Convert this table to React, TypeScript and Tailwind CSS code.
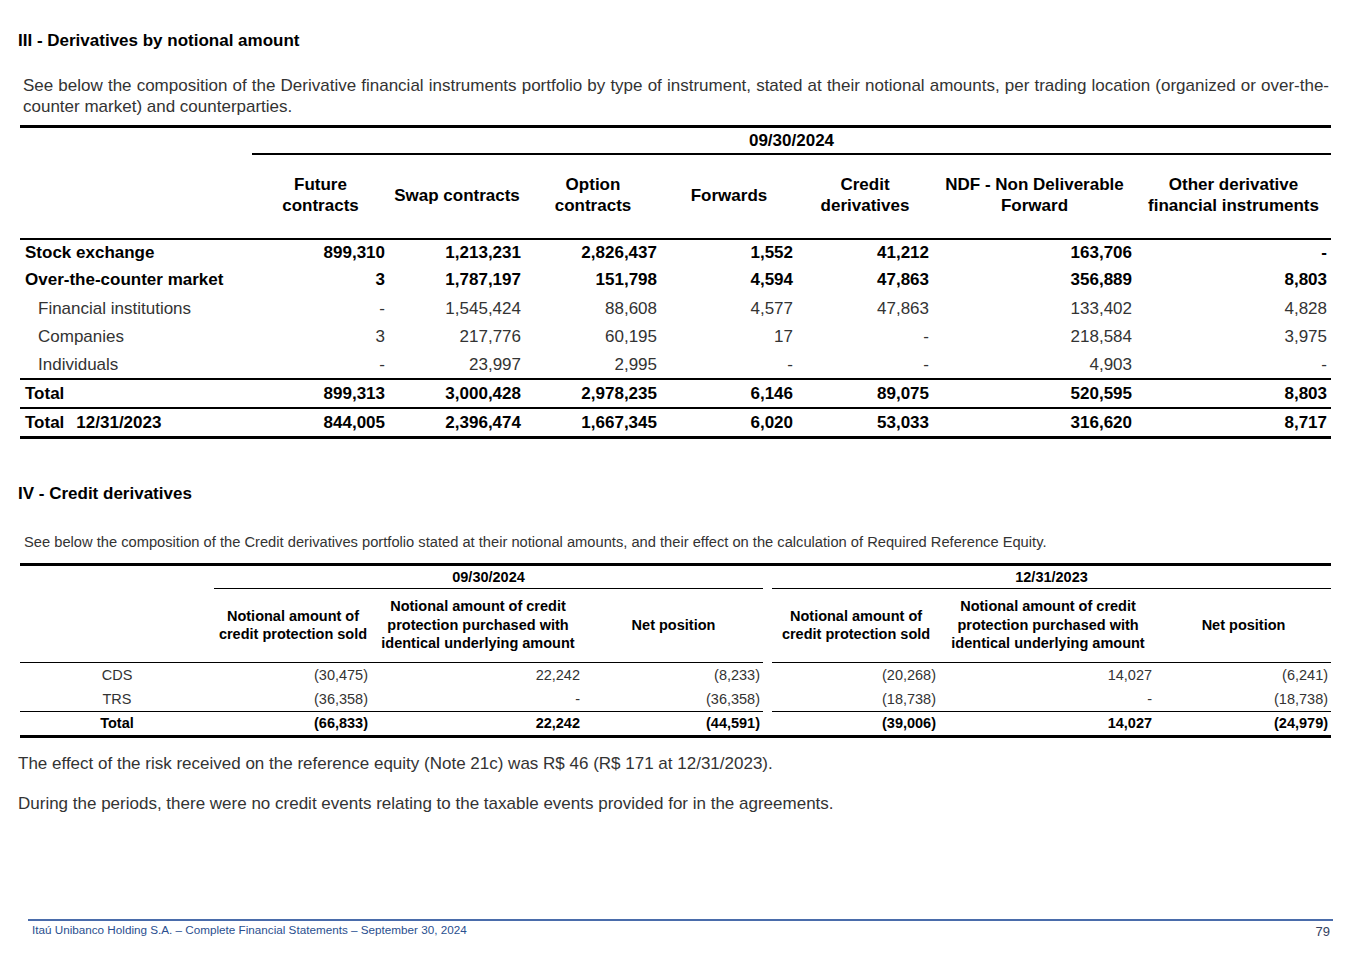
import React from 'react';

const font = "font-['Liberation_Sans',Arial,sans-serif]";

type Row = { label: string; values: string[]; bold?: boolean; indent?: boolean; h: string };

const notionalRows: Row[] = [
  { label: 'Stock exchange', values: ['899,310', '1,213,231', '2,826,437', '1,552', '41,212', '163,706', '-'], bold: true, h: 'h-[26px]' },
  { label: 'Over-the-counter market', values: ['3', '1,787,197', '151,798', '4,594', '47,863', '356,889', '8,803'], bold: true, h: 'h-[29px]' },
  { label: 'Financial institutions', values: ['-', '1,545,424', '88,608', '4,577', '47,863', '133,402', '4,828'], indent: true, h: 'h-[28px]' },
  { label: 'Companies', values: ['3', '217,776', '60,195', '17', '-', '218,584', '3,975'], indent: true, h: 'h-[29px]' },
  { label: 'Individuals', values: ['-', '23,997', '2,995', '-', '-', '4,903', '-'], indent: true, h: 'h-[28px]' },
];

const notionalHeaders: React.ReactNode[] = [
  <>Future<br />contracts</>,
  <>Swap contracts</>,
  <>Option<br />contracts</>,
  <>Forwards</>,
  <>Credit<br />derivatives</>,
  <>NDF - Non Deliverable<br />Forward</>,
  <>Other derivative<br />financial instruments</>,
];

function NotionalTable() {
  return (
    <div className="ml-[20px] mt-[8px] w-[1311px] border-y-[3px] border-black">
      <table className="w-full table-fixed border-collapse text-[17px] leading-[21px]">
        <colgroup>
          <col className="w-[232px]" />
          <col className="w-[137px]" />
          <col className="w-[136px]" />
          <col className="w-[136px]" />
          <col className="w-[136px]" />
          <col className="w-[136px]" />
          <col className="w-[203px]" />
          <col className="w-[195px]" />
        </colgroup>
        <thead>
          <tr className="h-[26px]">
            <th />
            <th colSpan={7} className="border-b-2 border-black p-0 text-center font-bold text-black">
              09/30/2024
            </th>
          </tr>
          <tr className="h-[85px]">
            <th className="border-b-2 border-black" />
            {notionalHeaders.map((hd, i) => (
              <th key={i} className="border-b-2 border-black p-0 pb-[3px] text-center align-middle font-bold text-black">
                {hd}
              </th>
            ))}
          </tr>
        </thead>
        <tbody>
          {notionalRows.map((r) => (
            <tr key={r.label} className={r.h}>
              <td className={`p-0 ${r.indent ? 'pl-[18px] text-[#333]' : 'pl-[5px] font-bold text-black'}`}>{r.label}</td>
              {r.values.map((v, i) => (
                <td key={i} className={`p-0 pr-[4px] text-right ${r.bold ? 'font-bold text-black' : 'text-[#333]'}`}>
                  {v}
                </td>
              ))}
            </tr>
          ))}
          <tr className="h-[29px] border-t-2 border-black font-bold">
            <td className="p-0 pl-[5px]">Total</td>
            {['899,313', '3,000,428', '2,978,235', '6,146', '89,075', '520,595', '8,803'].map((v, i) => (
              <td key={i} className="p-0 pr-[4px] text-right">{v}</td>
            ))}
          </tr>
          <tr className="h-[28px] border-t-2 border-black font-bold">
            <td className="p-0 pl-[5px]">
              Total<span className="ml-[12px]">12/31/2023</span>
            </td>
            {['844,005', '2,396,474', '1,667,345', '6,020', '53,033', '316,620', '8,717'].map((v, i) => (
              <td key={i} className="p-0 pr-[4px] text-right">{v}</td>
            ))}
          </tr>
        </tbody>
      </table>
    </div>
  );
}

const creditRows = [
  { label: 'CDS', values: ['(30,475)', '22,242', '(8,233)', '(20,268)', '14,027', '(6,241)'], h: 'h-[25px]' },
  { label: 'TRS', values: ['(36,358)', '-', '(36,358)', '(18,738)', '-', '(18,738)'], h: 'h-[24px]' },
];

function CreditHeaders() {
  return (
    <>
      <th className="border-b border-black p-0 text-center font-bold">
        Notional amount of<br />credit protection sold
      </th>
      <th className="border-b border-black p-0 text-center font-bold">
        Notional amount of credit<br />protection purchased with<br />identical underlying amount
      </th>
      <th className="border-b border-black p-0 text-center font-bold">Net position</th>
    </>
  );
}

function CreditCells({ values, bold }: { values: string[]; bold?: boolean }) {
  const cls = `p-0 pr-[4px] text-right ${bold ? 'font-bold text-black' : 'text-[#333]'}`;
  return (
    <>
      <td className={cls}>{values[0]}</td>
      <td className={cls}>{values[1]}</td>
      <td className={`${cls} !pr-[3px]`}>{values[2]}</td>
      <td className="p-0" />
      <td className={cls}>{values[3]}</td>
      <td className={cls}>{values[4]}</td>
      <td className={`${cls} !pr-[3px]`}>{values[5]}</td>
    </>
  );
}

function CreditTable() {
  return (
    <div className="ml-[20px] mt-[12px] w-[1311px] border-y-[3px] border-black">
      <table className="w-full table-fixed border-collapse text-[14.5px] leading-[18.5px]">
        <colgroup>
          <col className="w-[194px]" />
          <col className="w-[158px]" />
          <col className="w-[212px]" />
          <col className="w-[179px]" />
          <col className="w-[9px]" />
          <col className="w-[168px]" />
          <col className="w-[216px]" />
          <col className="w-[175px]" />
        </colgroup>
        <thead>
          <tr className="h-[22px]">
            <th />
            <th colSpan={3} className="border-b border-black p-0 text-center font-bold">09/30/2024</th>
            <th />
            <th colSpan={3} className="border-b border-black p-0 text-center font-bold">12/31/2023</th>
          </tr>
          <tr className="h-[74px]">
            <th className="border-b border-black" />
            <CreditHeaders />
            <th />
            <CreditHeaders />
          </tr>
        </thead>
        <tbody>
          {creditRows.map((r, idx) => (
            <tr key={r.label} className={r.h}>
              <td className={`p-0 text-center text-[#333] ${idx === 1 ? 'border-b border-black' : ''}`}>{r.label}</td>
              {idx === 1 ? (
                <>
                  {r.values.slice(0, 3).map((v, i) => (
                    <td key={i} className={`border-b border-black p-0 text-right text-[#333] ${i === 2 ? 'pr-[3px]' : 'pr-[4px]'}`}>{v}</td>
                  ))}
                  <td className="p-0" />
                  {r.values.slice(3).map((v, i) => (
                    <td key={i} className={`border-b border-black p-0 text-right text-[#333] ${i === 2 ? 'pr-[3px]' : 'pr-[4px]'}`}>{v}</td>
                  ))}
                </>
              ) : (
                <CreditCells values={r.values} />
              )}
            </tr>
          ))}
          <tr className="h-[24px]">
            <td className="p-0 text-center font-bold">Total</td>
            <CreditCells values={['(66,833)', '22,242', '(44,591)', '(39,006)', '14,027', '(24,979)']} bold />
          </tr>
        </tbody>
      </table>
    </div>
  );
}

export default function App() {
  return (
    <div className={`${font} relative h-[957px] w-[1351px] overflow-hidden bg-white text-black`}>
      <h2 className="pl-[18px] pt-[31px] text-[17px] font-bold leading-[20px]">III - Derivatives by notional amount</h2>

      <div className="mt-[24px] w-[1329px] pl-[23px] text-[17px] leading-[21px] text-[#333]">
        <p className="text-justify [text-align-last:justify]">
          See below the composition of the Derivative financial instruments portfolio by type of instrument, stated at their notional amounts, per trading location (organized or over-the-
        </p>
        <p>counter market) and counterparties.</p>
      </div>

      <NotionalTable />

      <h2 className="mt-[45px] pl-[18px] text-[17px] font-bold leading-[20px]">IV - Credit derivatives</h2>

      <p className="mt-[30px] pl-[24px] text-[14.7px] leading-[17px] text-[#333]">
        See below the composition of the Credit derivatives portfolio stated at their notional amounts, and their effect on the calculation of Required Reference Equity.
      </p>

      <CreditTable />

      <p className="mt-[16px] pl-[18px] text-[17px] leading-[20px] text-[#333]">
        The effect of the risk received on the reference equity (Note 21c) was R$ 46 (R$ 171 at 12/31/2023).
      </p>
      <p className="mt-[20px] pl-[18px] text-[17px] leading-[20px] text-[#333]">
        During the periods, there were no credit events relating to the taxable events provided for in the agreements.
      </p>

      <footer className="ml-[28px] mt-[105px] flex w-[1305px] items-start justify-between border-t-2 border-[#4a6cab] pt-[2px]">
        <span className="pl-[4px] text-[11.7px] leading-[14px] text-[#2a4f8f]">
          Itaú Unibanco Holding S.A. – Complete Financial Statements – September 30, 2024
        </span>
        <span className="pr-[3px] pt-[1px] text-[13px] leading-[15px] text-[#34415e]">79</span>
      </footer>
    </div>
  );
}
